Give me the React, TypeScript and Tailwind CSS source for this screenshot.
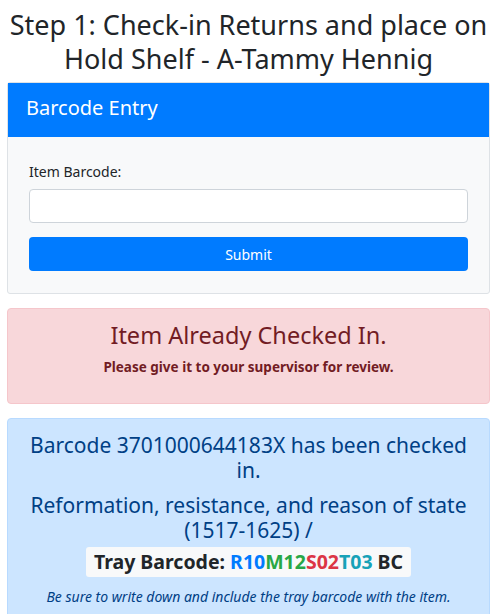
export default function App() {
  return (
    <div className="min-h-screen bg-white px-[7px] pt-[8px] text-[#212529]" style={{ fontFamily: '"Noto Sans", "Open Sans", sans-serif' }}>
      <h3 className="text-center text-[27px] leading-[34px] font-normal">
        Step 1: Check-in Returns and place on Hold Shelf - A-Tammy Hennig
      </h3>

      <div className="mt-[6px] rounded-[3px] border border-[#dee2e6] bg-[#f8f9fa]">
        <div className="bg-[#007bff] px-[18px] pt-[10px] pb-[14px] text-[20px] leading-[30px] text-white">Barcode Entry</div>
        <div className="px-[21px] pt-[24px] pb-[22px]">
          <label className="block text-[14px] leading-[21px]">Item Barcode:</label>
          <input className="mt-[7px] block h-[34px] w-full rounded-[4px] border border-[#ced4da] bg-white px-3" />
          <button className="mt-[14px] block h-[34px] w-full rounded-[4px] bg-[#007bff] text-[14px] text-white">Submit</button>
        </div>
      </div>

      <div className="mt-[14px] rounded-[4px] border border-[#f5c6cb] bg-[#f8d7da] px-5 pt-[11px] pb-[27px] text-center text-[#721c24]">
        <div className="text-[23.5px] leading-[30px]">Item Already Checked In.</div>
        <div className="mt-[8px] text-[13.5px] leading-[18px] font-bold">Please give it to your supervisor for review.</div>
      </div>

      <div className="mt-[14px] rounded-[4px] border border-[#b8daff] bg-[#cce5ff] px-5 pt-[14px] pb-3 text-center text-[#004085]">
        <div className="text-[21px] leading-[25px]">Barcode 3701000644183X has been checked in.</div>
        <div className="mt-[10px] text-[21px] leading-[25px]">Reformation, resistance, and reason of state (1517-1625) /</div>
        <div className="mt-[4px] inline-block rounded-[3px] bg-[#f8f9fa] px-2 py-[2px] text-[19.5px] leading-[26px] font-bold text-[#212529]">
          Tray Barcode: <span className="text-[#007bff]">R10</span>
          <span className="text-[#28a745]">M12</span>
          <span className="text-[#dc3545]">S02</span>
          <span className="text-[#17a2b8]">T03</span> BC
        </div>
        <div className="mt-[10px] text-[14px] leading-[20px] italic">Be sure to write down and include the tray barcode with the item.</div>
      </div>
    </div>
  );
}
